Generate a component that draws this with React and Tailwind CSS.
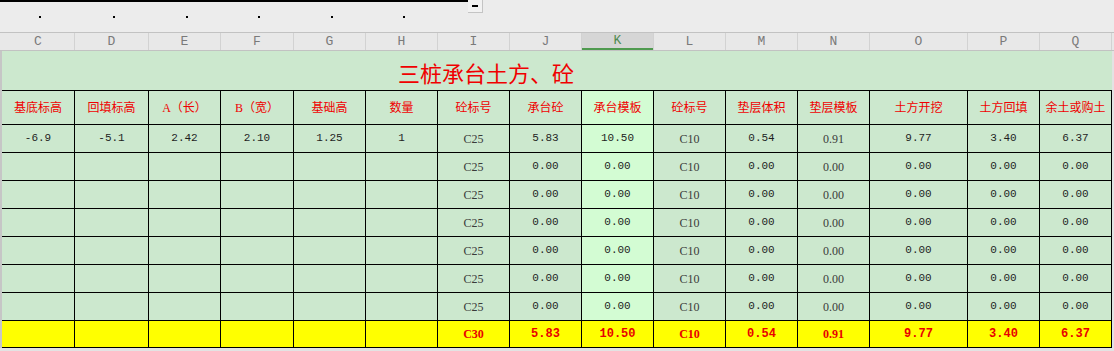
import React from 'react';

const cols = 'grid grid-cols-[72px_73px_71px_72px_71px_71px_71px_71px_71px_71px_71px_71px_97px_71px_71px]';
const letters = ['C', 'D', 'E', 'F', 'G', 'H', 'I', 'J', 'K', 'L', 'M', 'N', 'O', 'P', 'Q'];
const headers = ['基底标高', '回填标高', 'A（长）', 'B（宽）', '基础高', '数量', '砼标号', '承台砼', '承台模板', '砼标号', '垫层体积', '垫层模板', '土方开挖', '土方回填', '余土或购土'];

const emptyRow = ['', '', '', '', '', '', 'C25', '0.00', '0.00', 'C10', '0.00', '0.00', '0.00', '0.00', '0.00'];
const rows = [
    ['-6.9', '-5.1', '2.42', '2.10', '1.25', '1', 'C25', '5.83', '10.50', 'C10', '0.54', '0.91', '9.77', '3.40', '6.37'],
    emptyRow, emptyRow, emptyRow, emptyRow, emptyRow, emptyRow,
];
const total = ['', '', '', '', '', '', 'C30', '5.83', '10.50', 'C10', '0.54', '0.91', '9.77', '3.40', '6.37'];

// columns I, L, N print in a serif face, the rest in the monospaced one
const serifCols = [6, 9, 11];

const cellBg = (i) => (i === 8 ? 'bg-[#d3fcd3]' : 'bg-[#cce8ce]');

const App = () => {
    return (
        <div className="w-[1114px] h-[351px] overflow-hidden bg-[#e3e3e3] font-['Liberation_Sans','Noto_Sans_CJK_SC',sans-serif]">
            {/* Toolbar strip */}
            <div className="h-[32px] bg-[#ececec]">
                <div className="flex items-start">
                    <div className="w-[468px] h-[2px] bg-black"></div>
                    <div className="w-[15px] h-[13px] bg-[#f2f2f2] border-r border-b border-[#c4c4c4] flex items-center justify-center">
                        <div className="w-[6px] h-[2px] bg-black"></div>
                    </div>
                </div>
                <div className={`${cols} gap-x-px pl-[2px] pt-[3px]`}>
                    {letters.slice(0, 6).map((l) => (
                        <div key={l} className="flex justify-center pl-1">
                            <div className="w-[2px] h-[2px] bg-black"></div>
                        </div>
                    ))}
                </div>
            </div>

            {/* Column letters */}
            <div className="flex border-t border-b border-[#c2c2c2] bg-[#e8e8e8]">
                <div className="w-[2px] bg-[#e8e8e8]"></div>
                <div className={`${cols} gap-x-px bg-[#d2d2d2] pr-px`}>
                    {letters.map((l, i) => (
                        <div
                            key={l}
                            className={`h-[17px] flex items-center justify-center font-['Liberation_Mono',monospace] text-[13px] ${
                                i === 8 ? 'bg-[#d6d6d6] text-[#4e8a4e] border-b-2 border-[#4f9a4f]' : 'bg-[#e8e8e8] text-[#7a7a7a]'
                            }`}
                        >
                            {l}
                        </div>
                    ))}
                </div>
            </div>

            <div className="flex">
                <div className="w-[2px] bg-[#c6c6c6]"></div>
                <div className="w-[1110px]">
                    {/* Title */}
                    <div className="h-[40px] bg-[#cce8ce] border-b border-black flex items-center pl-[396px] pt-[2px]">
                        <span className="text-[22px] leading-none text-[#f00000] font-['Noto_Sans_CJK_SC',sans-serif]">
                            三桩承台土方、砼
                        </span>
                    </div>

                    <div className="flex flex-col gap-px bg-black pb-px pr-px">
                        {/* Field names */}
                        <div className={`${cols} gap-x-px`}>
                            {headers.map((h, i) => (
                                <div
                                    key={i}
                                    className={`h-[33px] flex items-center justify-center text-[12px] text-[#f00000] font-['Liberation_Serif','Noto_Sans_CJK_SC',serif] ${cellBg(i)}`}
                                >
                                    {h}
                                </div>
                            ))}
                        </div>

                        {rows.map((r, ri) => (
                            <div key={ri} className={`${cols} gap-x-px`}>
                                {r.map((v, i) => (
                                    <div
                                        key={i}
                                        className={`h-[27px] flex items-center justify-center ${cellBg(i)} ${
                                            serifCols.includes(i)
                                                ? "font-['Liberation_Serif',serif] text-[12px] text-[#3a3a3a]"
                                                : "font-['Liberation_Mono',monospace] text-[11px] text-[#1e1e1e]"
                                        }`}
                                    >
                                        {v}
                                    </div>
                                ))}
                            </div>
                        ))}

                        {/* Totals */}
                        <div className={`${cols} gap-x-px`}>
                            {total.map((v, i) => (
                                <div
                                    key={i}
                                    className={`h-[26px] flex items-center justify-center bg-[#ffff00] font-bold text-[#e80000] ${
                                        serifCols.includes(i)
                                            ? "font-['Liberation_Serif',serif] text-[12px]"
                                            : "font-['Liberation_Mono',monospace] text-[12px]"
                                    }`}
                                >
                                    {v}
                                </div>
                            ))}
                        </div>
                    </div>
                </div>
            </div>
        </div>
    );
};

export default App;
